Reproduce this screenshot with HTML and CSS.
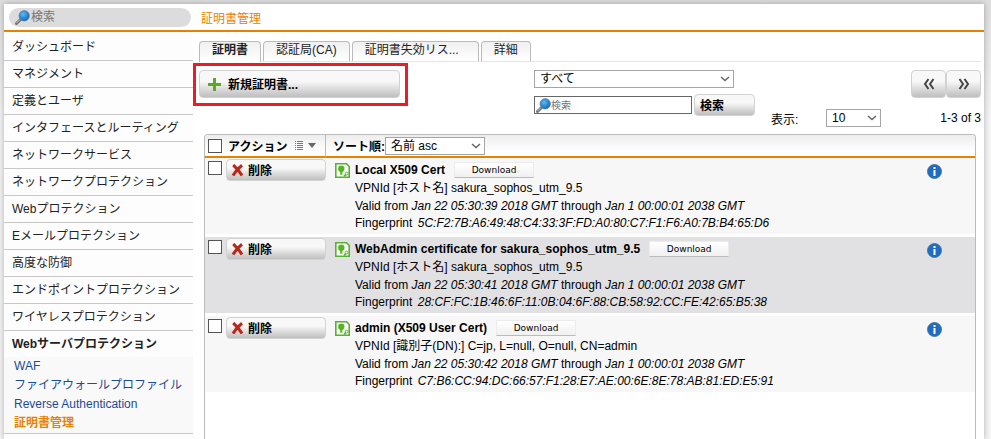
FILE: index.html
```
<!DOCTYPE html>
<html lang="ja">
<head>
	<meta charset="UTF-8">
	<title>証明書管理</title>
	<link rel="stylesheet" href="styles.css">
</head>
<body>
<svg class="sprite" width="0" height="0">
    <defs>
        <radialGradient id="lens" cx="0.4" cy="0.35" r="0.7">
            <stop offset="0" stop-color="#5db8f0"/>
            <stop offset="1" stop-color="#0d63b4"/>
        </radialGradient>
        <symbol id="icon-search" viewBox="0 0 15 15">
            <path d="M1.5 13.5L5.5 9.5" stroke="#777" stroke-width="3" stroke-linecap="round"/>
            <path d="M1.5 13L5 9.5" stroke="#bbb" stroke-width="1"/>
            <circle cx="9.2" cy="5.8" r="5.2" fill="url(#lens)" stroke="#5a87ab" stroke-width="0.8"/>
        </symbol>
        <symbol id="icon-delete" viewBox="0 0 13 13">
            <path d="M2.2 1C4 2.5 9 8 11 11.6M11 1.2C8 3.5 4 8 2 11.6" stroke="#b8271a" stroke-width="3" fill="none"/>
        </symbol>
        <symbol id="icon-cert" viewBox="0 0 15 15">
            <path d="M.8 .8h10.7L14.2 3.5v10.7H.8z" fill="#fff" stroke="#58b030" stroke-width="1.6"/>
            <circle cx="6.3" cy="5.8" r="3.2" fill="#58b522"/>
            <path d="M5.2 8h2.2v4.2l-1.1-1l-1.1 1z" fill="#58b522"/>
            <path d="M9 13.4l2-2" stroke="#58b030" stroke-width="1.6"/>
            <circle cx="11.6" cy="10.6" r="1.4" fill="#fff" stroke="#58b030"/>
        </symbol>
        <symbol id="icon-info" viewBox="0 0 15 15">
            <circle cx="7.5" cy="7.5" r="7" fill="#1e6dc0" stroke="#3c6c98" stroke-width="0.8"/>
            <path d="M6.5 3h2v2h-2zM6.5 6h2v6h-2z" fill="#fff"/>
        </symbol>
    </defs>
</svg>
<div id="wrapper">
    <div class="header">
        <label class="menu-search">
            <svg class="icon"><use href="#icon-search"/></svg>
            <input type="text" placeholder="検索" aria-label="検索">
        </label>
        <h1>証明書管理</h1>
    </div>
    <div class="content">
        <div class="nav-box">
            <ul class="slide-bar">
                <li><a href="#">ダッシュボード</a></li>
                <li><a href="#">マネジメント</a></li>
                <li><a href="#">定義とユーザ</a></li>
                <li><a href="#">インタフェースとルーティング</a></li>
                <li><a href="#">ネットワークサービス</a></li>
                <li><a href="#">ネットワークプロテクション</a></li>
                <li><a href="#">Webプロテクション</a></li>
                <li><a href="#">Eメールプロテクション</a></li>
                <li><a href="#">高度な防御</a></li>
                <li><a href="#">エンドポイントプロテクション</a></li>
                <li><a href="#">ワイヤレスプロテクション</a></li>
                <li>
                    <a href="#" class="current">Webサーバプロテクション</a>
                    <ul class="second-nav">
                        <li><a href="#">WAF</a></li>
                        <li><a href="#">ファイアウォールプロファイル</a></li>
                        <li><a href="#">Reverse Authentication</a></li>
                        <li><a href="#" class="current">証明書管理</a></li>
                    </ul>
                </li>
            </ul>
        </div>
        <div class="main">
            <div class="tabs">
                <a href="#" class="current">証明書</a>
                <a href="#">認証局(CA)</a>
                <a href="#" class="long">証明書失効リス...</a>
                <a href="#">詳細</a>
            </div>
            <div class="toolbar">
                <div class="new-box">
                    <button type="button" class="btn btn-new">
                        <svg class="icon-plus" viewBox="0 0 13 13"><path d="M6.5 0v13M0 6.5h13" stroke="#5fa823" stroke-width="3"/></svg>
                        新規証明書...
                    </button>
                </div>
                <div class="filter">
                    <select aria-label="種類"><option>すべて</option></select>
                    <div class="filter-row">
                        <label class="filter-input">
                            <svg class="icon"><use href="#icon-search"/></svg>
                            <input type="text" placeholder="検索" aria-label="検索">
                        </label>
                        <button type="button" class="btn">検索</button>
                    </div>
                </div>
                <div class="pager">
                    <div class="pager-btns">
                        <button type="button" class="btn" aria-label="前へ"><svg viewBox="0 0 12 12"><path d="M5.5 1L2 6l3.5 5M10.5 1L7 6l3.5 5"/></svg></button>
                        <button type="button" class="btn" aria-label="次へ"><svg viewBox="0 0 12 12"><path d="M1.5 1L5 6l-3.5 5M6.5 1L10 6l-3.5 5"/></svg></button>
                    </div>
                    <div class="pager-row">
                        <label for="limit">表示:</label>
                        <select id="limit"><option>10</option></select>
                        <span>1-3 of 3</span>
                    </div>
                </div>
            </div>
            <div class="list-box">
                <table>
                    <thead>
                        <tr>
                            <th class="col-action">
                                <div class="action">
                                    <input type="checkbox" aria-label="すべて選択">
                                    <span>アクション</span>
                                    <svg class="icon-list" viewBox="0 0 22 9"><path d="M0 .5h1M2 .5h6M0 2.5h1M2 2.5h6M0 4.5h1M2 4.5h6M0 6.5h1M2 6.5h6M0 8.5h1M2 8.5h6" stroke="#777"/><path d="M13 2h8l-4 5z" fill="#666"/></svg>
                                </div>
                            </th>
                            <th class="col-sort" colspan="2">
                                <div class="sort">
                                    <label for="sort">ソート順:</label>
                                    <select id="sort"><option>名前 asc</option></select>
                                </div>
                            </th>
                        </tr>
                    </thead>
                    <tbody>
                        <tr>
                            <td class="col-action">
                                <div class="action">
                                    <input type="checkbox" aria-label="Local X509 Cert">
                                    <button type="button" class="btn"><svg class="icon-x"><use href="#icon-delete"/></svg>削除</button>
                                </div>
                            </td>
                            <td class="cert">
                                <h2><svg class="icon"><use href="#icon-cert"/></svg>Local X509 Cert <button type="button" class="download">Download</button></h2>
                                <p>VPNId [ホスト名] sakura_sophos_utm_9.5</p>
                                <p>Valid from <em>Jan 22 05:30:39 2018 GMT</em> through <em>Jan 1 00:00:01 2038 GMT</em></p>
                                <p class="finger">Fingerprint <em>5C:F2:7B:A6:49:48:C4:33:3F:FD:A0:80:C7:F1:F6:A0:7B:B4:65:D6</em></p>
                            </td>
                            <td class="col-info"><button type="button" aria-label="情報"><svg class="icon"><use href="#icon-info"/></svg></button></td>
                        </tr>
                        <tr class="even">
                            <td class="col-action">
                                <div class="action">
                                    <input type="checkbox" aria-label="WebAdmin certificate">
                                    <button type="button" class="btn"><svg class="icon-x"><use href="#icon-delete"/></svg>削除</button>
                                </div>
                            </td>
                            <td class="cert">
                                <h2><svg class="icon"><use href="#icon-cert"/></svg>WebAdmin certificate for sakura_sophos_utm_9.5 <button type="button" class="download">Download</button></h2>
                                <p>VPNId [ホスト名] sakura_sophos_utm_9.5</p>
                                <p>Valid from <em>Jan 22 05:30:41 2018 GMT</em> through <em>Jan 1 00:00:01 2038 GMT</em></p>
                                <p class="finger">Fingerprint <em>28:CF:FC:1B:46:6F:11:0B:04:6F:88:CB:58:92:CC:FE:42:65:B5:38</em></p>
                            </td>
                            <td class="col-info"><button type="button" aria-label="情報"><svg class="icon"><use href="#icon-info"/></svg></button></td>
                        </tr>
                        <tr>
                            <td class="col-action">
                                <div class="action">
                                    <input type="checkbox" aria-label="admin (X509 User Cert)">
                                    <button type="button" class="btn"><svg class="icon-x"><use href="#icon-delete"/></svg>削除</button>
                                </div>
                            </td>
                            <td class="cert">
                                <h2><svg class="icon"><use href="#icon-cert"/></svg>admin (X509 User Cert) <button type="button" class="download">Download</button></h2>
                                <p>VPNId [識別子(DN):] C=jp, L=null, O=null, CN=admin</p>
                                <p>Valid from <em>Jan 22 05:30:42 2018 GMT</em> through <em>Jan 1 00:00:01 2038 GMT</em></p>
                                <p class="finger">Fingerprint <em>C7:B6:CC:94:DC:66:57:F1:28:E7:AE:00:6E:8E:78:AB:81:ED:E5:91</em></p>
                            </td>
                            <td class="col-info"><button type="button" aria-label="情報"><svg class="icon"><use href="#icon-info"/></svg></button></td>
                        </tr>
                    </tbody>
                </table>
            </div>
        </div>
    </div>
</div>
</body>
</html>
```
FILE: styles.css
```
*,*:after{
    box-sizing: border-box;
}
body,h1,h2,ul,li,p,input,button,select,th,td{
    margin: 0;
    padding: 0;
}
body{
    padding: 4px 7px 0 4px;
    background: linear-gradient(#dedede, #f5f5f5 120px);
    font-size: 12px;
    font-family: "Liberation Sans", "Noto Sans CJK JP", sans-serif;
    color: #000;
}
input,button,select{
    font: inherit;
    color: inherit;
}
a{
    text-decoration: none;
    color: #222;
}
ul{
    list-style: none;
}
.sprite{
    position: absolute;
}
.icon{
    width: 15px;
    height: 15px;
    flex: none;
}
#wrapper{
    display: flex;
    flex-direction: column;
    min-height: calc(100vh - 4px);
    background: #fff;
    box-shadow: 0 0 6px rgba(0,0,0,.3);
}

/* header */
.header{
    display: flex;
    align-items: center;
    height: 28px;
    padding-left: 5px;
    border-bottom: 2px solid #e58300;
}
.menu-search{
    display: flex;
    align-items: center;
    width: 182px;
    height: 19px;
    margin-right: 10px;
    padding-left: 6px;
    border-radius: 10px;
    background: #dcdcdc;
}
.menu-search input{
    width: 140px;
    height: 18px;
    padding-left: 1px;
    border: 0;
    background: none;
}
input::placeholder{
    color: #757575;
}
.header h1{
    padding-top: 3px;
    font-size: 12px;
    font-weight: normal;
    line-height: 18px;
    color: #e58300;
}

/* left menu */
.content{
    display: flex;
    flex: 1;
}
.nav-box{
    flex: none;
    width: 189px;
    padding-top: 2px;
    background: #fdfdfd;
}
.slide-bar>li{
    border-bottom: 1px solid #c8c8c8;
}
.slide-bar>li>a{
    display: block;
    height: 26px;
    padding-left: 8px;
    line-height: 26px;
    white-space: nowrap;
}
.slide-bar>li>a.current{
    font-weight: bold;
}
.second-nav{
    background: #f9f9f9;
}
.second-nav a{
    display: block;
    height: 19px;
    padding-left: 10px;
    line-height: 19px;
    white-space: nowrap;
    color: #1c4a94;
}
.second-nav a.current{
    font-weight: bold;
    color: #e58300;
}

/* tabs */
.main{
    display: flex;
    flex: 1;
    flex-direction: column;
    padding: 9px 3px 0 6px;
}
.tabs{
    display: flex;
    gap: 2px;
    height: 21px;
    border-bottom: 1px solid #e4e4e4;
}
.tabs a{
    height: 20px;
    padding: 0 12px;
    border: 1px solid #bbb;
    border-bottom: 0;
    border-radius: 4px 4px 0 0;
    background: linear-gradient(#f0f0f0, #fff);
    line-height: 17px;
}
.tabs a.current{
    height: 21px;
    font-weight: bold;
}
.tabs a.long{
    padding-right: 19px;
}

/* buttons and fields */
.btn{
    display: flex;
    align-items: center;
    height: 22px;
    padding-bottom: 2px;
    border: 1px solid #d2d2d2;
    border-radius: 4px;
    background: linear-gradient(#f8f8f8 40%, #e4e4e4 60%, #bfbfbf);
    font-weight: bold;
}
.btn svg{
    margin-top: 2px;
}
select{
    appearance: none;
    height: 18px;
    padding: 0 16px 0 5px;
    border: 1px solid #a5a5a5;
    border-radius: 0;
    background: #fff url("data:image/svg+xml,%3Csvg xmlns='http://www.w3.org/2000/svg' width='10' height='6'%3E%3Cpath d='M1 1l4 3.5l4-3.5' fill='none' stroke='%23666' stroke-width='1.5'/%3E%3C/svg%3E") no-repeat right 3px center;
    line-height: 16px;
}
input[type="checkbox"]{
    appearance: none;
    flex: none;
    width: 14px;
    height: 14px;
    border: 1px solid #555;
    background: #fff;
}

/* toolbar */
.toolbar{
    display: flex;
    gap: 16px;
    height: 72px;
    padding-top: 8px;
}
.new-box{
    position: relative;
    margin-right: auto;
}
.new-box:after{
    content: "";
    position: absolute;
    top: -7px;
    left: -6px;
    width: 215px;
    height: 43px;
    border: 3px solid #ed1c24;
    pointer-events: none;
}
.btn-new{
    width: 201px;
    height: 28px;
    padding-left: 8px;
}
.icon-plus{
    width: 13px;
    height: 13px;
    margin-right: 7px;
}
.filter select{
    display: block;
    width: 200px;
    margin-bottom: 6px;
}
.filter-row{
    display: flex;
    align-items: center;
    gap: 2px;
}
.filter-input{
    display: flex;
    align-items: center;
    width: 158px;
    height: 18px;
    padding-left: 1px;
    border: 1px solid #666;
}
.filter-input input{
    width: 135px;
    height: 16px;
    border: 0;
    background: none;
    font-size: 10px;
}
.filter-row .btn{
    width: 61px;
    padding-left: 5px;
}
.pager{
    width: 210px;
}
.pager-btns{
    display: flex;
    justify-content: flex-end;
    margin-bottom: 11px;
}
.pager-btns .btn{
    justify-content: center;
    width: 35px;
    height: 28px;
}
.pager-btns svg{
    width: 12px;
    height: 12px;
    fill: none;
    stroke: #444;
    stroke-width: 2;
}
.pager-row{
    display: flex;
    align-items: center;
    height: 18px;
}
.pager-row label,.pager-row select{
    width: 55px;
}
.pager-row span{
    margin-left: auto;
}

/* certificate list */
.list-box{
    flex: 1;
    margin: 0 5px;
    border: 1px solid #bbb;
    border-bottom: 0;
    border-radius: 4px 4px 0 0;
}
table{
    width: 100%;
    border-spacing: 0;
}
th{
    height: 23px;
    border-bottom: 2px solid #e58300;
    background: linear-gradient(#ededed, #fff 80%);
    text-align: left;
}
td{
    border-bottom: 3px solid #fff;
    background: #f7f7f7;
    vertical-align: top;
}
.even td{
    background: #e1e1e4;
}
.col-action{
    width: 121px;
}
th.col-action{
    border-right: 1px solid #bbb;
    border-top-left-radius: 3px;
}
.action{
    display: flex;
    gap: 4px;
    padding-left: 3px;
}
th .action{
    align-items: center;
}
.action span{
    padding-left: 2px;
}
.icon-list{
    width: 22px;
    height: 9px;
    margin: 0 8px 0 auto;
}
td .action{
    padding-top: 1px;
}
td .action input{
    margin-top: 2px;
}
.action .btn{
    width: 100px;
    padding-left: 4px;
}
.icon-x{
    width: 13px;
    height: 13px;
    margin-right: 4px;
}
.col-sort{
    padding-left: 7px;
    border-top-right-radius: 3px;
}
.sort{
    display: flex;
    align-items: center;
}
.sort select{
    width: 100px;
    font-weight: normal;
}
.cert{
    padding: 3px 0 3px 9px;
}
.cert h2{
    display: flex;
    align-items: center;
    height: 18px;
    font-size: 12px;
}
.cert h2 .icon{
    margin-right: 5px;
}
.cert p{
    height: 18px;
    padding-left: 20px;
    line-height: 18px;
    white-space: nowrap;
}
.cert p.finger{
    height: 16px;
    line-height: 16px;
}
.finger em{
    padding-left: 2px;
}
.download{
    width: 80px;
    height: 16px;
    margin-left: 9px;
    border: 1px solid #ececec;
    border-bottom-color: #bbb;
    background: linear-gradient(#fff, #f0f0f0);
    font-family: "DejaVu Sans", sans-serif;
    font-size: 9px;
    font-weight: normal;
    line-height: 14px;
}
.col-info{
    width: 48px;
    padding-top: 6px;
}
.col-info button{
    display: block;
    height: 15px;
    border: 0;
    background: none;
}
```
